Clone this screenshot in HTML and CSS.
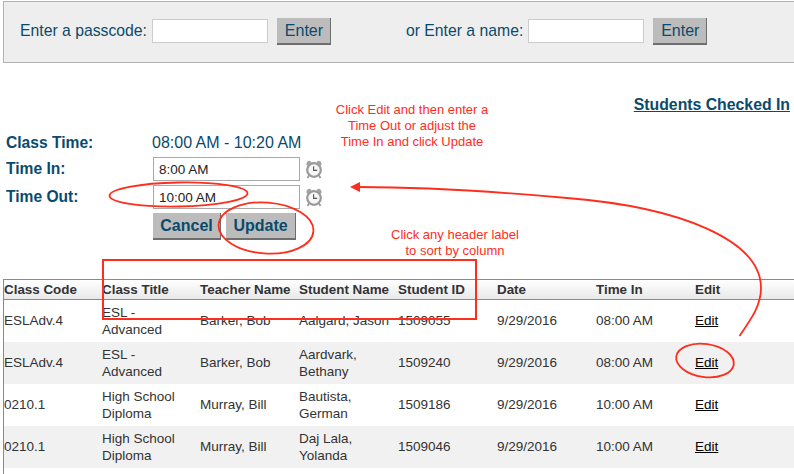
FILE: index.html
```html
<!DOCTYPE html>
<html lang="en">
<head>
<meta charset="utf-8">
<title>Students Checked In</title>
<link rel="stylesheet" href="styles.css">
</head>
<body>
<div class="page">
  <form class="lookup">
    <label class="lookup-label">Enter a passcode:</label>
    <input class="lookup-input" type="text">
    <button class="btn btn-plain" type="button">Enter</button>
    <label class="lookup-label lookup-second">or Enter a name:</label>
    <input class="lookup-input" type="text">
    <button class="btn btn-plain" type="button">Enter</button>
  </form>

  <div class="title-row"><a class="title" href="#">Students Checked In</a></div>

  <div class="edit-form">
    <div class="edit-label">Class Time:</div>
    <div class="edit-value">08:00 AM - 10:20 AM</div>
    <div class="edit-label">Time In:</div>
    <div class="edit-field">
      <input class="time-input" type="text" value="8:00 AM">
      <svg class="clock" viewBox="0 0 18 19"><use href="#clock"/></svg>
    </div>
    <div class="edit-label">Time Out:</div>
    <div class="edit-field">
      <input class="time-input" type="text" value="10:00 AM">
      <svg class="clock" viewBox="0 0 18 19"><use href="#clock"/></svg>
    </div>
    <div class="edit-actions">
      <button class="btn btn-bold btn-cancel" type="button">Cancel</button>
      <button class="btn btn-bold btn-update" type="button">Update</button>
    </div>
  </div>

  <div class="roster-wrap">
    <table class="roster">
      <thead>
        <tr><th>Class Code</th><th>Class Title</th><th>Teacher Name</th><th>Student Name</th><th>Student ID</th><th>Date</th><th>Time In</th><th>Edit</th></tr>
      </thead>
      <tbody>
        <tr><td class="single">ESLAdv.4</td><td>ESL -<br>Advanced</td><td class="single">Barker, Bob</td><td class="single">Aalgard, Jason</td><td class="single">1509055</td><td class="single">9/29/2016</td><td class="single">08:00 AM</td><td class="single"><a href="#">Edit</a></td></tr>
        <tr><td class="single">ESLAdv.4</td><td>ESL -<br>Advanced</td><td class="single">Barker, Bob</td><td>Aardvark,<br>Bethany</td><td class="single">1509240</td><td class="single">9/29/2016</td><td class="single">08:00 AM</td><td class="single"><a href="#">Edit</a></td></tr>
        <tr><td class="single">0210.1</td><td>High School<br>Diploma</td><td class="single">Murray, Bill</td><td>Bautista,<br>German</td><td class="single">1509186</td><td class="single">9/29/2016</td><td class="single">10:00 AM</td><td class="single"><a href="#">Edit</a></td></tr>
        <tr><td class="single">0210.1</td><td>High School<br>Diploma</td><td class="single">Murray, Bill</td><td>Daj Lala,<br>Yolanda</td><td class="single">1509046</td><td class="single">9/29/2016</td><td class="single">10:00 AM</td><td class="single"><a href="#">Edit</a></td></tr>
      </tbody>
    </table>
  </div>

  <p class="note note-edit">Click Edit and then enter a<br>Time Out or adjust the<br>Time In and click Update</p>
  <p class="note note-sort">Click any header label<br>to sort by column</p>

  <svg class="markup" viewBox="0 0 794 474" aria-hidden="true">
    <defs>
      <g id="clock">
        <path d="M1.5 5 Q1 1 4.800 .8 L6.500 2 L2.500 6 Z M16.500 5 Q17 1 13.200 .8 L11.500 2 L15.500 6 Z" fill="#a3a3a3"/>
        <path d="M4 15.500 L2.500 18 M14 15.500 L15.500 18" stroke="#9a9a9a" stroke-width="1.800" fill="none"/>
        <circle cx="9" cy="10" r="6.800" fill="#f7f7f7" stroke="#999" stroke-width="2.200"/>
        <path d="M8.600 6.200 V10.400 H12.200" stroke="#555" stroke-width="1.100" fill="none"/>
      </g>
    </defs>
    <g class="ink">
      <rect x="103" y="260" width="373" height="59" stroke-width="2"/>
      <ellipse cx="178.500" cy="194.500" rx="69" ry="12" transform="rotate(-1 178.500 194.500)"/>
      <ellipse cx="266" cy="228" rx="47.500" ry="25.500" transform="rotate(4 266 228)"/>
      <ellipse cx="705" cy="360.500" rx="29" ry="16.500" transform="rotate(8 705 360.500)"/>
      <path d="M739.500 336 C752 318 761 305 761 288 C761 240 680 207 567 198 C500 192 430 187 358 187"/>
    </g>
    <path class="arrow-head" d="M350 187 L360 182 L360 192 Z"/>
  </svg>
</div>
</body>
</html>
```
FILE: styles.css
```css
html, body {
  margin: 0;
  padding: 0;
  background: #fff;
}

.page {
  position: relative;
  width: 794px;
  height: 474px;
  overflow: hidden;
  padding-top: 1px;
  box-sizing: border-box;
  font-family: "Liberation Sans", Arial, sans-serif;
  color: #333;
}

.lookup {
  display: flex;
  align-items: center;
  box-sizing: border-box;
  width: 800px;
  height: 62px;
  margin-left: 3px;
  padding: 0 0 2px 16px;
  background: #eeeeee;
  border: 1px solid #b3b3b3;
}

.lookup-label {
  font-size: 15.75px;
  color: #0a4a6c;
  margin-right: 5px;
}

.lookup-second {
  margin-left: 75px;
}

.lookup-input {
  box-sizing: border-box;
  width: 116px;
  height: 24px;
  margin: 0 9px 0 0;
  padding: 0;
  background: #fff;
  border: 1px solid #cccccc;
  border-radius: 0;
}

.btn {
  box-sizing: border-box;
  height: 27px;
  margin: 0;
  padding: 0;
  font-family: inherit;
  color: #0a4a6c;
  background: #bcbcbc;
  border: 0;
  border-right: 1px solid #6e6e6e;
  border-bottom: 2px solid #6e6e6e;
  border-radius: 0;
}

.btn-plain {
  width: 54px;
  padding: 1px 0 0 1px;
  font-size: 16px;
}

.btn-bold {
  font-size: 16px;
  font-weight: bold;
}

.btn-cancel {
  width: 68px;
}

.btn-update {
  width: 70px;
}

.title-row {
  display: flex;
  justify-content: flex-end;
  height: 58px;
  padding: 33px 4px 0 0;
  box-sizing: border-box;
}

.title {
  font-size: 15.8px;
  line-height: 18px;
  font-weight: bold;
  color: #0a4a6c;
}

.edit-form {
  display: grid;
  grid-template-columns: 147px auto;
  grid-template-rows: 24px 28px 28px 31px;
  margin: 10px 0 0 6px;
  align-items: center;
}

.edit-label {
  font-size: 15.6px;
  font-weight: bold;
  color: #0a4a6c;
}

.edit-value {
  margin-left: -1px;
  font-size: 16px;
  color: #0a4a6c;
}

.edit-field {
  display: flex;
  align-items: center;
  gap: 5px;
}

.time-input {
  box-sizing: border-box;
  width: 147px;
  height: 24px;
  margin: 0;
  padding: 0 0 0 5px;
  font-family: inherit;
  font-size: 13.5px;
  color: #222;
  background: #fff;
  border: 1px solid #a9a9a9;
  border-radius: 0;
}

.clock {
  width: 18px;
  height: 19px;
}

.edit-actions {
  grid-column: 2;
  display: flex;
  gap: 5px;
}

.roster-wrap {
  height: 195px;
  margin: 37px 0 0 3px;
  border-left: 1px solid #8a8a8a;
}

.roster {
  border-collapse: separate;
  border-spacing: 0;
  table-layout: fixed;
  width: 790px;
  font-size: 13.5px;
}

.roster th {
  box-sizing: border-box;
  width: 99px;
  height: 21px;
  padding: 0;
  text-align: left;
  font-size: 13.4px;
  font-weight: bold;
  line-height: 17px;
  background: linear-gradient(#ffffff, #e9e9e9);
  border-top: 1px solid #8a8a8a;
  border-bottom: 1px solid #8a8a8a;
}

.roster th:first-child,
.roster th:nth-child(2) {
  width: 98px;
}

.roster td {
  box-sizing: border-box;
  height: 42px;
  padding: 0;
  line-height: 17px;
  vertical-align: middle;
}

.roster td.single {
  padding-bottom: 2px;
}

.roster tbody tr:nth-child(even) td {
  background: #f1f1f1;
}

.roster td a {
  color: #000;
}

.note {
  position: absolute;
  margin: 0;
  font-size: 13px;
  line-height: 16px;
  text-align: center;
  color: #ff2d1c;
}

.note-edit {
  left: 312px;
  top: 102px;
  width: 200px;
}

.note-sort {
  left: 355px;
  top: 227px;
  width: 200px;
}

.markup {
  position: absolute;
  left: 0;
  top: 0;
  width: 794px;
  height: 474px;
  pointer-events: none;
}

.ink {
  fill: none;
  stroke: #ff2d1c;
  stroke-width: 1.8;
}

.arrow-head {
  fill: #ff2d1c;
}
```
